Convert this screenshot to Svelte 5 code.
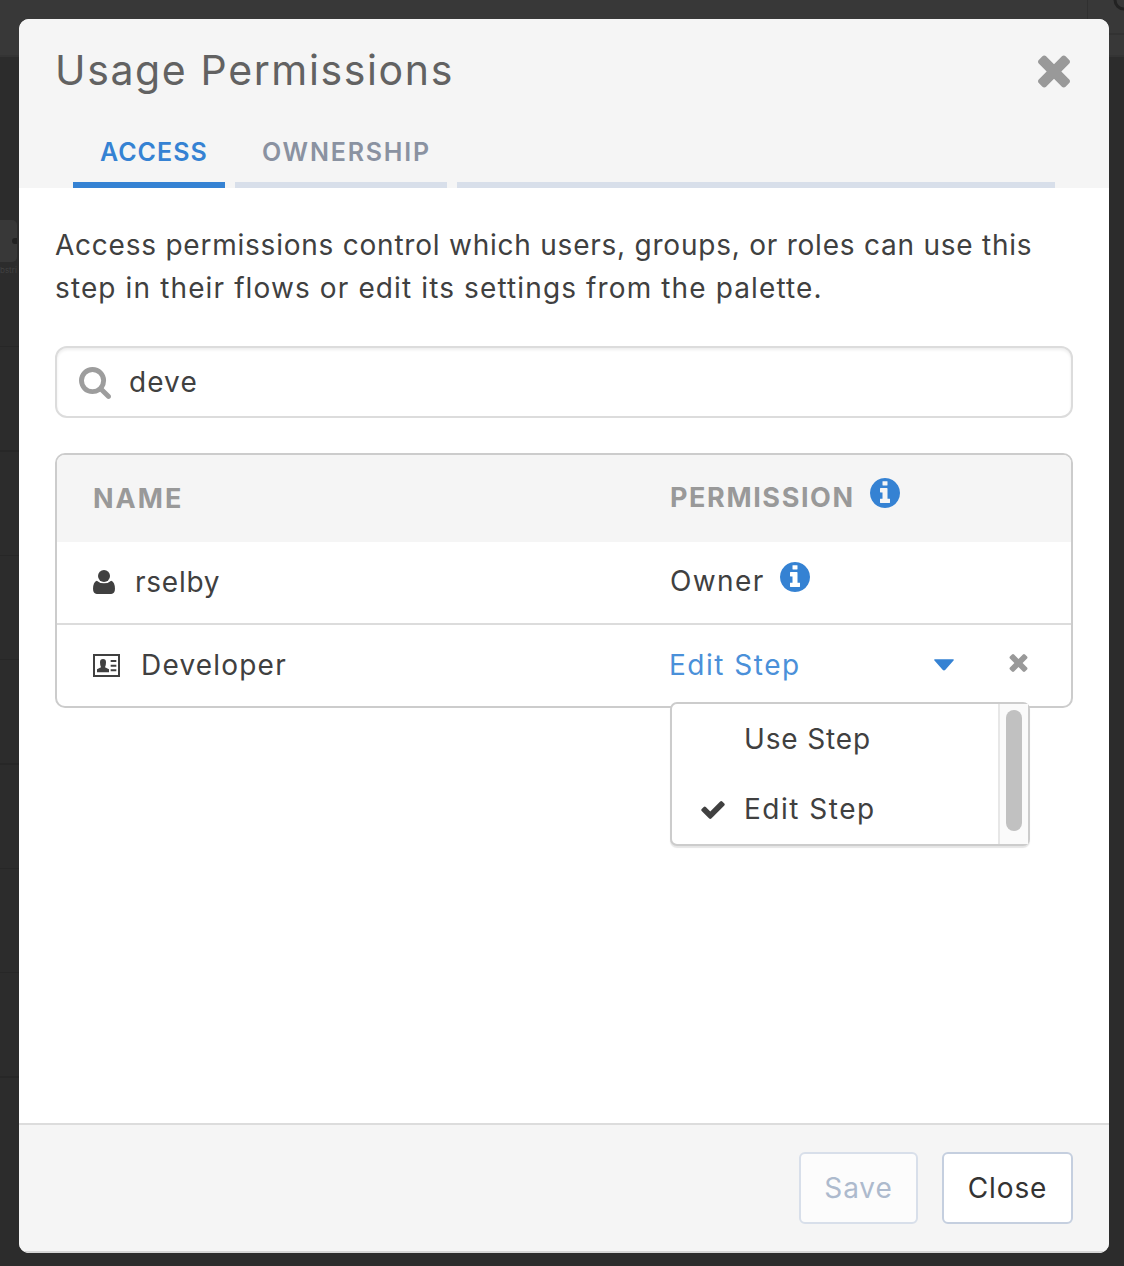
<script>
  const times = 'M1490 1322q0 40-28 68l-136 136q-28 28-68 28t-68-28l-294-294-294 294q-28 28-68 28t-68-28l-136-136q-28-28-28-68t28-68l294-294-294-294q-28-28-28-68t28-68l136-136q28-28 68-28t68 28l294 294 294-294q28-28 68-28t68 28l136 136q28 28 28 68t-28 68l-294 294 294 294q28 28 28 68z';
  const info = 'M1152 1376v-160q0-14-9-23t-23-9h-96v-512q0-14-9-23t-23-9h-320q-14 0-23 9t-9 23v160q0 14 9 23t23 9h96v320h-96q-14 0-23 9t-9 23v160q0 14 9 23t23 9h448q14 0 23-9t9-23zm-128-896v-160q0-14-9-23t-23-9h-192q-14 0-23 9t-9 23v160q0 14 9 23t23 9h192q14 0 23-9t9-23zm640 416q0 209-103 385.5t-279.5 279.5-385.5 103-385.5-103-279.5-279.5-103-385.5 103-385.5 279.5-279.5 385.5-103 385.5 103 279.5 279.5 103 385.5z';
  let query = $state('deve');
</script>

<div class="page">
  <div class="backdrop">
    <div class="topbar"><span class="cell"></span></div>
    <div class="lanes">
      <div class="node"><span class="port"></span></div>
      <span class="caption">bstri</span>
      <div class="lines"></div>
    </div>
    <svg class="ring" viewBox="0 0 12 12"><circle cx="12" cy="0" r="9" /></svg>
  </div>

  <section class="modal" role="dialog" aria-label="Usage Permissions">
    <header>
      <div class="titlebar">
        <h1>Usage Permissions</h1>
        <svg class="close" viewBox="302 366 1188 1188"><path d={times} /></svg>
      </div>
      <nav>
        <div class="tab active"><span>ACCESS</span></div>
        <div class="tab owner"><span>OWNERSHIP</span></div>
        <div class="tab rest"></div>
      </nav>
    </header>

    <main>
      <p><span class="l1">Access permissions control which users, groups, or roles can use this</span><br /><span class="l2">step in their flows or edit its settings from the palette.</span></p>

      <label class="search">
        <svg viewBox="64 128 1664 1664"><path d="M1216 832q0-185-131.5-316.5t-316.5-131.5-316.5 131.5-131.5 316.5 131.5 316.5 316.5 131.5 316.5-131.5 131.5-316.5zm512 832q0 52-38 90t-90 38q-54 0-90-38l-343-342q-179 124-399 124-143 0-273.5-55.5t-225-150-150-225-55.5-273.5 55.5-273.5 150-225 225-150 273.5-55.5 273.5 55.5 225 150 150 225 55.5 273.5q0 220-124 399l343 343q37 37 37 90z" /></svg>
        <input bind:value={query} aria-label="Search" />
      </label>

      <div class="table">
        <div class="row head">
          <div class="name"><span class="t-name">NAME</span></div>
          <div class="perm"><span class="t-perm">PERMISSION</span><svg class="info" viewBox="128 128 1536 1536"><path d={info} /></svg></div>
        </div>
        <div class="row">
          <div class="name">
            <svg class="user" viewBox="0 0 64 70"><path d="M11 31Q20 39 32 39T53 31Q64 35 64 55Q64 70 53 70H11Q0 70 0 55Q0 35 11 31Z" /><circle cx="32" cy="17.500" r="17.500" /></svg>
            <span class="t-rs">rselby</span>
          </div>
          <div class="perm"><span class="t-owner">Owner</span><svg class="info" viewBox="128 128 1536 1536"><path d={info} /></svg></div>
        </div>
        <div class="row last">
          <div class="name">
            <svg class="card" viewBox="0 0 81 69"><path fill-rule="evenodd" d="M0 0H81V69H0ZM6 6V63H75V6ZM12 55V46L24 40Q21 34 21 25Q21 15 30 15T39 25Q39 34 36 40L48 46V55ZM53 18H70V24H53ZM53 32H70V38H53ZM53 46H70V52H53Z" /></svg>
            <span class="t-dev">Developer</span>
          </div>
          <div class="perm select">
            <span class="t-edit">Edit Step</span>
            <svg class="caret" viewBox="0 0 58 34"><path d="M3 0H55Q60 1 56 5L33 31Q29 35 25 31L2 5Q-2 1 3 0Z" /></svg>
            <svg class="remove" viewBox="302 366 1188 1188"><path d={times} /></svg>
            <div class="menu">
              <div class="options">
                <div class="option"><span class="tick"></span><span class="t-use">Use Step</span></div>
                <div class="option">
                  <span class="tick"><svg viewBox="121 334 1550 1188"><path d="M1671 566q0 40-28 68l-724 724-136 136q-28 28-68 28t-68-28l-136-136-362-362q-28-28-28-68t28-68l136-136q28-28 68-28t68 28l294 295 656-657q28-28 68-28t68 28l136 136q28 28 28 68z" /></svg></span>
                  <span class="t-edit">Edit Step</span>
                </div>
              </div>
              <div class="track"><div class="thumb"></div></div>
            </div>
          </div>
        </div>
      </div>
    </main>

    <footer>
      <button class="save" disabled><span>Save</span></button>
      <button class="done"><span>Close</span></button>
    </footer>
  </section>
</div>

<style>
  :global(body) { margin: 0; background: #2c2c2c; }
  * { box-sizing: border-box; }
  svg { display: block; flex: none; fill: currentColor; }
  span { white-space: nowrap; }
  .page {
    position: relative; width: 1124px; height: 1266px; padding: 19px 15px 13px 19px;
    overflow: hidden; font-family: Inter, "Liberation Sans", sans-serif; font-size: 28px; font-weight: 400; color: #404040;
  }
  .backdrop { position: absolute; inset: 0; background: #2c2c2c; }
  .topbar { height: 57px; background: #383838; border-bottom: 2px solid #343434; display: flex; justify-content: flex-end; }
  .cell { width: 37px; height: 35px; border-left: 1px solid #303030; border-bottom: 2px solid #323232; }
  .ring { position: absolute; right: 0; top: 0; width: 12px; height: 12px; fill: none; stroke: #222; stroke-width: 3; }
  .lanes { height: 1209px; padding-top: 163px; }
  .lines { width: 19px; height: 835px; margin-top: 2px; background: repeating-linear-gradient(transparent 0 66px, #272727 66px 67.500px, transparent 67.500px 104.300px); }
  .node { width: 17px; height: 42px; background: #383838; border-radius: 0 5px 5px 0; display: flex; align-items: center; justify-content: flex-end; }
  .port { width: 5px; height: 6px; border-radius: 3px 0 0 3px; background: #222; }
  .caption { display: block; font-size: 8px; line-height: 16px; color: #414141; }

  .modal {
    position: relative; height: 1234px; border-radius: 10px; background: #fff; overflow: hidden;
    display: flex; flex-direction: column;
  }
  header { height: 169px; background: #f5f5f5; }
  .titlebar { display: flex; justify-content: space-between; height: 105px; padding: 0 39px 0 36px; }
  h1 { margin: 0; font-size: 41px; line-height: 50px; padding-top: 26px; font-weight: 400; color: #626262; letter-spacing: 1.63px; white-space: nowrap; }
  .close { width: 32px; height: 33px; margin-top: 36px; color: #999; }
  nav { display: flex; gap: 10px; padding: 0 54px; height: 64px; }
  .tab { border-bottom: 6px solid #d8dfea; font-size: 25px; line-height: 30px; font-weight: 600; color: #8a92a1; padding-top: 13px; }
  .active { width: 152px; padding-left: 27px; color: #3582d3; border-color: #3582d3; letter-spacing: 1px; }
  .owner { width: 212px; padding-left: 27px; letter-spacing: 1.8px; }
  .rest { flex: 1; }

  main { flex: 1; padding: 36px 36px 0; }
  p { margin: 0; line-height: 43px; height: 122px; white-space: nowrap; }
  .l1 { letter-spacing: 0.77px; }
  .l2 { letter-spacing: 1.12px; }
  .search {
    display: flex; align-items: center; height: 72px; border: 2px solid #dcdcdc; border-radius: 12px;
    padding-left: 22px; gap: 18px; box-shadow: inset 0 2px 3px rgba(0, 0, 0, 0.07);
  }
  .search svg { width: 32px; height: 32px; margin-top: 2px; color: #9d9d9d; }
  input { flex: 1; border: 0; outline: 0; background: none; padding: 0; font: inherit; color: #404040; letter-spacing: 1.1px; }
  .table { margin-top: 35px; height: 255px; border: 2px solid #ccc; border-radius: 10px; }
  .row { display: flex; height: 83px; border-bottom: 2px solid #dcdcdc; }
  .head { height: 87px; background: #f5f5f5; border: 0; border-radius: 8px 8px 0 0; color: #999; font-weight: 700; font-size: 27px; }
  .last { border: 0; height: 81px; }
  .name { width: 613px; padding-left: 36px; display: flex; align-items: center; }
  .perm { position: relative; flex: 1; display: flex; align-items: center; padding-bottom: 2px; }
  .user { width: 22px; height: 24px; margin: 0 20px 1px 0; }
  .card { width: 27px; height: 23px; margin-right: 21px; }
  .t-name { letter-spacing: 2px; }
  .t-perm { width: 183px; letter-spacing: 1.6px; }
  .t-rs { letter-spacing: 0.75px; margin-bottom: 2px; }
  .t-owner { width: 93px; letter-spacing: 1.4px; margin-bottom: 1px; }
  .t-dev { letter-spacing: 1.2px; margin-bottom: 1px; }
  .t-edit { letter-spacing: 1.5px; }
  .t-use { letter-spacing: 0.85px; }
  .info { width: 30px; height: 30px; margin: 0 0 9px 17px; color: #3582d3; }
  .select > .t-edit { width: 130px; color: #4a90d9; margin-left: -1px; }
  .caret { width: 20px; height: 12px; margin-left: 135px; color: #3582d3; }
  .remove { width: 19px; height: 18px; margin: 0 0 4px 55px; color: #999; }
  .menu {
    position: absolute; left: 0; top: 77px; width: 360px; height: 144px; display: flex;
    background: #fff; border: 2px solid #ccc; border-radius: 7px; box-shadow: 0 2px 1px rgba(0, 0, 0, 0.1);
  }
  .options { flex: 1; }
  .option { display: flex; align-items: center; height: 70px; }
  .tick { width: 72px; padding-left: 29px; }
  .tick svg { width: 24px; height: 18px; margin-top: 1px; }
  .track { width: 30px; border-left: 2px solid #e7e7e7; background: #fafafa; padding: 6px 6px; }
  .thumb { width: 16px; height: 121px; border-radius: 8px; background: #c1c1c1; }

  footer { height: 130px; background: #f5f5f5; border-top: 2px solid #dcdcdc; border-bottom: 2px solid #d5d5d5; display: flex; justify-content: flex-end; gap: 24px; padding: 27px 36px 0 0; }
  button { height: 72px; border: 2px solid #c5cfdf; border-radius: 6px; background: #fff; color: #333; font: inherit; padding: 0; letter-spacing: 0.9px; }
  .save { width: 119px; border-color: #d8dfea; background: #fcfcfc; color: #adbacd; }
  .done { width: 131px; }
</style>
